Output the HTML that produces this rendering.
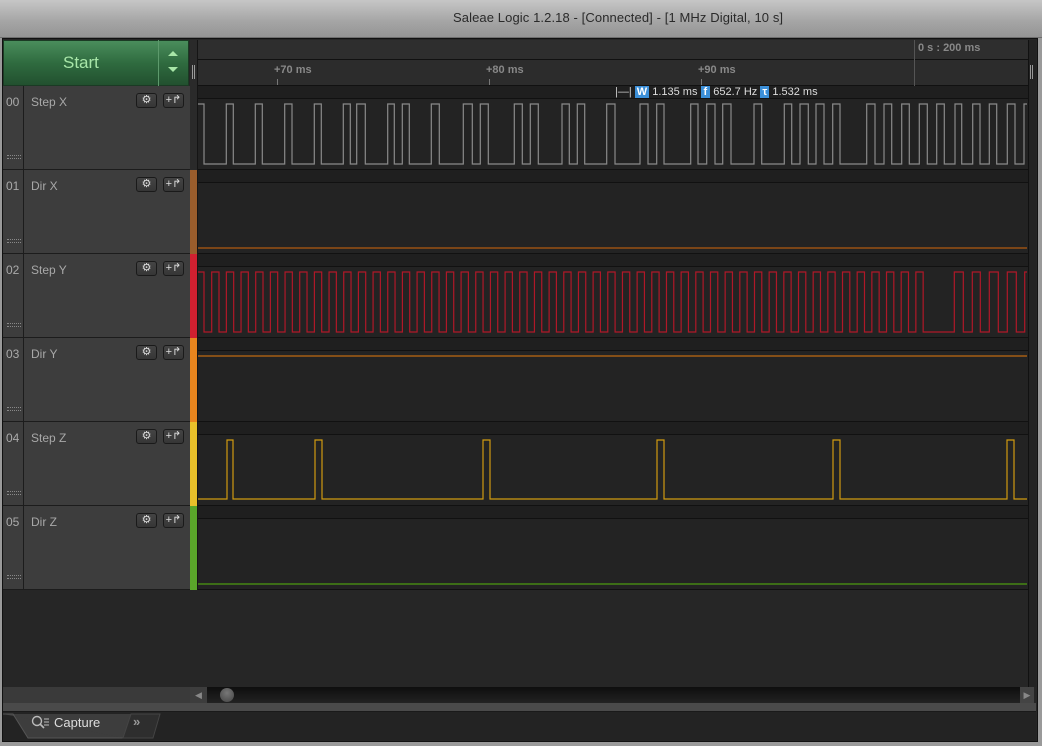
<!DOCTYPE html>
<html><head><meta charset="utf-8">
<style>
*{margin:0;padding:0;box-sizing:border-box}
body{width:1042px;height:746px;overflow:hidden;background:#9a9a9a;font-family:"Liberation Sans",sans-serif;position:relative}
.abs{position:absolute}
#title{left:0;top:0;width:1042px;height:38px;background:linear-gradient(#c6c6c6,#a4a4a4 60%,#959595);border-bottom:1px solid #6e6e6e}
#title span{position:absolute;left:453px;top:10px;font-size:13px;color:#2a2a2a;letter-spacing:0.1px}
#main{left:2px;top:38px;width:1036px;height:704px;background:#262626;border:1px solid #111}
.row{left:3px;width:187px;height:84px;background:#3d3d3d;border-bottom:1px solid #1c1c1c}
.num{position:absolute;left:0;top:0;width:21px;height:83px;border-right:1px solid #1c1c1c;color:#aaa;font-size:12px;padding:9px 0 0 3px}
.lbl{position:absolute;left:28px;top:9px;font-size:12px;color:#a8a8a8}
.btn{position:absolute;top:7px;width:21px;height:15px;border:1px solid #1a1a1a;border-radius:3px;background:linear-gradient(#444,#363636);color:#ddd;font-size:11px;text-align:center;line-height:13px}
.dots{position:absolute;left:4px;top:69px;width:14px;height:4px;border-top:1px dotted #888;border-bottom:1px dotted #888}
</style></head><body>
<div id="title" class="abs"><span>Saleae Logic 1.2.18 - [Connected] - [1 MHz Digital, 10 s]</span></div>
<div id="main" class="abs"></div>

<div class="abs" style="left:3px;top:40px;width:186px;height:46px;background:linear-gradient(#4a8d5c,#2f6b3f 50%,#22502f);border:1px solid #1b3a24"></div>
<div class="abs" style="left:158px;top:40px;width:1px;height:46px;background:#5d9a6c"></div>
<div class="abs" style="left:63px;top:53px;font-size:17px;color:#a8e6a8">Start</div>
<svg class="abs" style="left:166px;top:50px" width="14" height="28"><polygon points="2,6 12,6 7,1" fill="#a8e6a8"/><polygon points="2,17 12,17 7,22" fill="#a8e6a8"/></svg>

<div class="abs" style="left:190px;top:40px;width:838px;height:20px;background:#2e2e2e;border-bottom:1px solid #111"></div>
<div class="abs" style="left:190px;top:60px;width:838px;height:26px;background:#2c2c2c;border-bottom:1px solid #111"></div>
<div class="abs" style="left:190px;top:40px;width:8px;height:550px;background:#2a2a2a;border-right:1px solid #151515"></div>
<div class="abs" style="left:192px;top:65px;width:3px;height:14px;border-left:1px solid #999;border-right:1px solid #999"></div>
<div class="abs" style="left:914px;top:40px;width:1px;height:46px;background:#555"></div>
<div class="abs" style="left:918px;top:42px;font-size:11px;color:#888;font-weight:bold">0 s : 200 ms</div>
<div class="abs" style="left:274px;top:64px;font-size:11px;color:#888;font-weight:bold">+70 ms</div>
<div class="abs" style="left:486px;top:64px;font-size:11px;color:#888;font-weight:bold">+80 ms</div>
<div class="abs" style="left:698px;top:64px;font-size:11px;color:#888;font-weight:bold">+90 ms</div>
<div class="abs" style="left:277px;top:79px;width:1px;height:6px;background:#777"></div>
<div class="abs" style="left:489px;top:79px;width:1px;height:6px;background:#777"></div>
<div class="abs" style="left:701px;top:79px;width:1px;height:6px;background:#777"></div>
<div class="abs" style="left:1028px;top:40px;width:8px;height:647px;background:#232323;border-left:1px solid #111"></div>
<div class="abs" style="left:1030px;top:65px;width:3px;height:14px;border-left:1px solid #999;border-right:1px solid #999"></div>

<div class="row abs" style="top:86px"><div class="num">00</div><div class="lbl">Step X</div><div class="btn" style="left:133px">&#9881;</div><div class="btn" style="left:160px">+&#8625;</div><div class="dots"></div></div>
<div class="row abs" style="top:170px"><div class="num">01</div><div class="lbl">Dir X</div><div class="btn" style="left:133px">&#9881;</div><div class="btn" style="left:160px">+&#8625;</div><div class="dots"></div></div>
<div class="row abs" style="top:254px"><div class="num">02</div><div class="lbl">Step Y</div><div class="btn" style="left:133px">&#9881;</div><div class="btn" style="left:160px">+&#8625;</div><div class="dots"></div></div>
<div class="row abs" style="top:338px"><div class="num">03</div><div class="lbl">Dir Y</div><div class="btn" style="left:133px">&#9881;</div><div class="btn" style="left:160px">+&#8625;</div><div class="dots"></div></div>
<div class="row abs" style="top:422px"><div class="num">04</div><div class="lbl">Step Z</div><div class="btn" style="left:133px">&#9881;</div><div class="btn" style="left:160px">+&#8625;</div><div class="dots"></div></div>
<div class="row abs" style="top:506px"><div class="num">05</div><div class="lbl">Dir Z</div><div class="btn" style="left:133px">&#9881;</div><div class="btn" style="left:160px">+&#8625;</div><div class="dots"></div></div>

<svg class="abs" style="left:0;top:0" width="1042" height="746" id="wv">
<g id="bands"></g>
<rect x="190" y="170" width="7" height="84" fill="#9a5d2c"/>
<rect x="190" y="254" width="7" height="84" fill="#d02030"/>
<rect x="190" y="338" width="7" height="84" fill="#e8851e"/>
<rect x="190" y="422" width="7" height="84" fill="#e8c02a"/>
<rect x="190" y="506" width="7" height="84" fill="#5aa62a"/>
<polyline id="sx" fill="none" stroke="#8a8a8a" stroke-width="1.2"/>
<polyline id="sy" fill="none" stroke="#b01828" stroke-width="1.2"/>
<polyline id="sz" fill="none" stroke="#d09a10" stroke-width="1.2"/>
<line x1="198" y1="248" x2="1027" y2="248" stroke="#b05a10" stroke-width="1.2"/>
<line x1="198" y1="356" x2="1027" y2="356" stroke="#c06a10" stroke-width="1.2"/>
<line x1="198" y1="584" x2="1027" y2="584" stroke="#4d9a10" stroke-width="1.2"/>
</svg>

<div class="abs" style="left:615px;top:86px;font-size:11px;color:#ddd;white-space:nowrap">
<span style="color:#ccc">|&#8212;|</span>
<span style="background:#3b8fd8;color:#fff;font-weight:bold;padding:0 2px">W</span> 1.135 ms
<span style="background:#3b8fd8;color:#fff;font-weight:bold;padding:0 3px">f</span> 652.7 Hz
<span style="background:#3b8fd8;color:#fff;font-weight:bold;padding:0 2px">τ</span> 1.532 ms</div>

<div class="abs" style="left:3px;top:687px;width:187px;height:16px;background:#3a3a3a"></div>
<div class="abs" style="left:190px;top:687px;width:17px;height:16px;background:#3d3d3d;color:#888;font-size:9px;line-height:16px;text-align:center">&#9664;</div>
<div class="abs" style="left:207px;top:687px;width:813px;height:16px;background:linear-gradient(#0e0e0e,#222)"></div>
<div class="abs" style="left:220px;top:688px;width:14px;height:14px;border-radius:7px;background:radial-gradient(circle at 50% 35%,#777,#444)"></div>
<div class="abs" style="left:1020px;top:687px;width:14px;height:16px;background:#444;color:#888;font-size:9px;line-height:16px;text-align:center">&#9654;</div>
<div class="abs" style="left:3px;top:703px;width:1033px;height:9px;background:#4a4a4a;border-bottom:1px solid #1a1a1a"></div>
<div class="abs" style="left:3px;top:712px;width:1033px;height:29px;background:#232323"></div>
<svg class="abs" style="left:3px;top:712px" width="160" height="30"><path d="M0,2 L10,2 L25,26 L120,26 L126,10 L130,2 L0,2Z" fill="#3d3d3d"/><path d="M0,2 L10,2 L25,26 L120,26" fill="#3d3d3d" stroke="#555"/><path d="M120,26 L150,26 L157,2 L128,2Z" fill="#2e2e2e" stroke="#444"/></svg>
<svg class="abs" style="left:31px;top:715px" width="20" height="16"><circle cx="6" cy="6" r="4.5" fill="none" stroke="#bbb" stroke-width="1.4"/><line x1="9" y1="9" x2="13" y2="13" stroke="#bbb" stroke-width="1.6"/><line x1="13" y1="4" x2="18" y2="4" stroke="#bbb"/><line x1="13" y1="7" x2="18" y2="7" stroke="#bbb"/><line x1="13" y1="10" x2="18" y2="10" stroke="#bbb"/></svg>
<div class="abs" style="left:54px;top:715px;font-size:13px;color:#ddd">Capture</div>
<div class="abs" style="left:133px;top:714px;font-size:13px;color:#999;font-weight:bold">&#187;</div>

<script>
var NS="http://www.w3.org/2000/svg",b=document.getElementById('bands');
function r(x,y,w,h,f){var e=document.createElementNS(NS,'rect');e.setAttribute('x',x);e.setAttribute('y',y);e.setAttribute('width',w);e.setAttribute('height',h);e.setAttribute('fill',f);b.appendChild(e);}
for(var i=0;i<6;i++){var y=86+i*84;
 r(198,y,830,84,'#232323');r(198,y,830,12,'#1f1f1f');r(198,y+12,830,1,'#111');r(198,y+83,830,1,'#111');
}
function wave(id,hi,lo,start,edges){var p=[[198,start?hi:lo]],s=start;edges.forEach(function(x){p.push([x,s?hi:lo]);s=!s;p.push([x,s?hi:lo]);});p.push([1027,s?hi:lo]);document.getElementById(id).setAttribute('points',p.map(function(a){return a.join(',')}).join(' '));}
wave('sx',104,164,1,[204,226.3,233.3,255.3,262.3,284.7,292,314.3,321.3,343.3,350.3,356.7,365.3,387.7,394.3,402.3,409.3,431.3,439.3,463.3,472.3,480.3,488.3,514.3,522.3,530.3,538.3,562,569.3,577.3,584.7,606.7,615,640,648,656.7,664,690.7,698,706.7,715,722.7,731,754,761.7,784.3,791.7,800,808.3,816,824,832.7,840,866.7,875,884,891.7,901.7,909.3,919.3,927.3,936.7,944.3,955,961.7,972.7,980,989.3,996.7,1007.3,1015,1024]);
var e=[204];for(var k=0;k<49;k++){var r0=211.7+k*14.67;e.push(r0,r0+7.3);}
e.push(954.3,963.3,972.3,980.3,989.3,998.3,1007.3,1016.3,1024.7);
wave('sy',272,332,1,e);
wave('sz',440,499,0,[227,233,315,322,483,490,657,664,833,840,1007,1014]);
</script>
</body></html>
